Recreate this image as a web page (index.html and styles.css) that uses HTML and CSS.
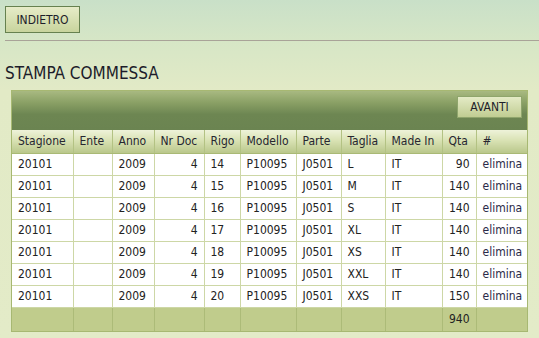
FILE: index.html
```html
<!DOCTYPE html>
<html lang="it">
<head>
    <meta charset="UTF-8" />
    <title>Stampa Commessa</title>
    <link rel="stylesheet" href="styles.css">
</head>
<body>
    <div class="topbar">
        <button class="btn btn-back">INDIETRO</button>
    </div>
    <hr class="rule">

    <h1 class="title">STAMPA COMMESSA</h1>

    <div class="panel">
        <div class="panel-bar">
            <button class="btn btn-next">AVANTI</button>
        </div>
        <table class="grid">
            <colgroup>
                <col style="width:61px"><col style="width:39px"><col style="width:42px">
                <col style="width:50px"><col style="width:36px"><col style="width:56px">
                <col style="width:45px"><col style="width:44px"><col style="width:57px">
                <col style="width:34px"><col style="width:51px">
            </colgroup>
            <thead>
                <tr>
                    <th>Stagione</th><th>Ente</th><th>Anno</th><th>Nr Doc</th><th>Rigo</th>
                    <th>Modello</th><th>Parte</th><th>Taglia</th><th>Made In</th><th>Qta</th><th>#</th>
                </tr>
            </thead>
            <tbody>
                <tr><td>20101</td><td></td><td>2009</td><td class="num">4</td><td>14</td><td>P10095</td><td>J0501</td><td>L</td><td>IT</td><td class="num">90</td><td><a class="del" href="#">elimina</a></td></tr>
                <tr><td>20101</td><td></td><td>2009</td><td class="num">4</td><td>15</td><td>P10095</td><td>J0501</td><td>M</td><td>IT</td><td class="num">140</td><td><a class="del" href="#">elimina</a></td></tr>
                <tr><td>20101</td><td></td><td>2009</td><td class="num">4</td><td>16</td><td>P10095</td><td>J0501</td><td>S</td><td>IT</td><td class="num">140</td><td><a class="del" href="#">elimina</a></td></tr>
                <tr><td>20101</td><td></td><td>2009</td><td class="num">4</td><td>17</td><td>P10095</td><td>J0501</td><td>XL</td><td>IT</td><td class="num">140</td><td><a class="del" href="#">elimina</a></td></tr>
                <tr><td>20101</td><td></td><td>2009</td><td class="num">4</td><td>18</td><td>P10095</td><td>J0501</td><td>XS</td><td>IT</td><td class="num">140</td><td><a class="del" href="#">elimina</a></td></tr>
                <tr><td>20101</td><td></td><td>2009</td><td class="num">4</td><td>19</td><td>P10095</td><td>J0501</td><td>XXL</td><td>IT</td><td class="num">140</td><td><a class="del" href="#">elimina</a></td></tr>
                <tr><td>20101</td><td></td><td>2009</td><td class="num">4</td><td>20</td><td>P10095</td><td>J0501</td><td>XXS</td><td>IT</td><td class="num">150</td><td><a class="del" href="#">elimina</a></td></tr>
            </tbody>
            <tfoot>
                <tr><td></td><td></td><td></td><td></td><td></td><td></td><td></td><td></td><td></td><td class="num">940</td><td></td></tr>
            </tfoot>
        </table>
    </div>
</body>
</html>
```

FILE: styles.css
```css
/* General Reset */
* {
    box-sizing: border-box;
}
html {
    background: #e2eac7;
}
body {
    margin: 0;
    padding: 6px 0 0 0;
    min-height: 338px;
    font-family: "DejaVu Sans Condensed", "DejaVu Sans", sans-serif;
    font-stretch: condensed;
    font-size: 12px;
    color: #222;
    background: linear-gradient(to bottom, #c9e0c8 0, #d6e6c6 40px, #e2eac6 90px, #e3ebc8 100%);
}
.topbar {
    padding-left: 5px;
}
.btn {
    font-family: inherit;
    font-stretch: condensed;
    color: #1e1e2a;
    cursor: pointer;
}
.btn-back {
    display: block;
    height: 27px;
    width: 75px;
    padding: 0;
    font-size: 12px;
    border: 1px solid #66814f;
    background: linear-gradient(to bottom, #e6ecc8, #c8d49d);
}
.rule {
    border: 0;
    height: 1px;
    margin: 7px 0 0 5px;
    background: #a9a398;
}
.title {
    margin: 22px 0 6px 5px;
    font-size: 17px;
    line-height: 21px;
    font-weight: normal;
    color: #1c1c2a;
}
.panel {
    width: 517px;
    margin-left: 11px;
    border: 1px solid #a7b872;
}
.panel-bar {
    height: 39px;
    display: flex;
    justify-content: flex-end;
    align-items: flex-start;
    padding: 5px 5px 0 0;
    background: linear-gradient(to bottom, #a8b981 0, #8aa065 30%, #6d8652 60%, #6b8451 100%);
}
.btn-next {
    height: 22px;
    width: 65px;
    padding: 0;
    font-size: 12px;
    border: 1px solid #8fa56c;
    background: linear-gradient(to bottom, #e4ebc6, #c0cd92);
}
.grid {
    width: 515px;
    border-collapse: collapse;
    table-layout: fixed;
    border-style: hidden;
}
.grid th,
.grid td {
    padding: 0 6px;
    text-align: left;
    font-weight: normal;
    white-space: nowrap;
    overflow: hidden;
}
.grid th {
    height: 23px;
    color: #262630;
    border: 1px solid #b3c283;
    border-top: 0;
    border-bottom-color: #a9b975;
    background: linear-gradient(to bottom, #eef2d9 0, #d9e2b4 45%, #b9c78b 100%);
}
.grid tbody td {
    height: 22px;
    background: #fff;
    border: 1px solid #cdd7a6;
}
.grid tfoot td {
    height: 24px;
    background: #c0cc8c;
    border: 1px solid #acbb78;
}
.grid .num {
    text-align: right;
}
.del {
    color: #2a2a48;
    text-decoration: none;
}
```
